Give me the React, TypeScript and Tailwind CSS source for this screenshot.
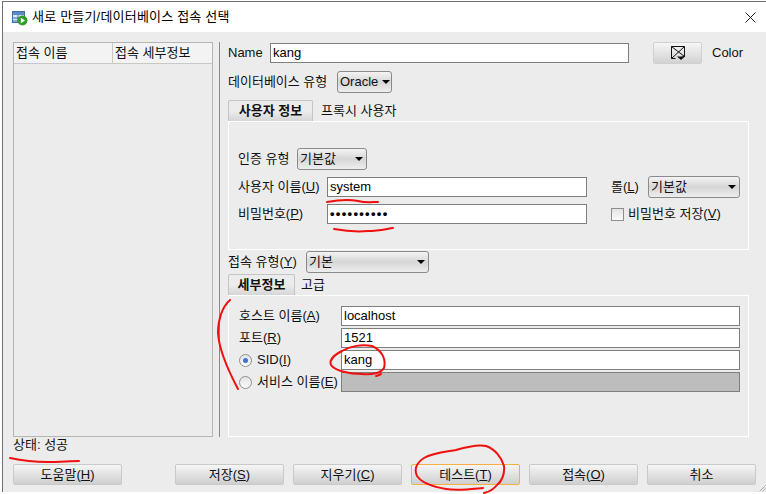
import type { ReactNode } from "react";

function Combo({ label, width }: { label: string; width: string }) {
  return (
    <div className={`flex h-[22px] shrink-0 items-center justify-between rounded-[3px] border border-[#8a8a8a] bg-gradient-to-b from-[#f4f4f4] via-[#d6d6d6] to-[#eeeeee] pl-[2px] ${width}`}>
      <span>{label}</span>
      <span className="h-0 w-0 border-x-[4px] border-t-[4px] border-x-transparent border-t-black" />
    </div>
  );
}

function Field({ value, width, className = "bg-white" }: { value?: ReactNode; width: string; className?: string }) {
  return (
    <div className={`flex h-[20px] shrink-0 items-center border border-[#7f7f7f] pl-[2px] text-black ${width} ${className}`}>
      {value}
    </div>
  );
}

function Btn({ children, focused = false }: { children: ReactNode; focused?: boolean }) {
  return (
    <button
      className={`flex h-[21px] w-[109px] shrink-0 items-center justify-center rounded-[2px] border bg-gradient-to-b from-[#f6f6f6] via-[#e2e2e2] to-[#cfcfcf] text-[#111] ${
        focused ? "border-[#f5b042]" : "border-[#c9c9c9]"
      }`}
    >
      {children}
    </button>
  );
}

function Radio({ checked = false }: { checked?: boolean }) {
  return (
    <span className="mr-[5px] flex h-[13px] w-[13px] shrink-0 items-center justify-center rounded-full border border-[#8e8e8e] bg-gradient-to-b from-[#e4e4e4] to-[#fbfbfb]">
      {checked && <span className="h-[5px] w-[5px] rounded-full bg-[#3f6fd0]" />}
    </span>
  );
}

function Tab({ label, width }: { label: string; width: string }) {
  return (
    <div className={`flex h-full items-center justify-center rounded-t-[2px] border-x border-t border-[#c4c4c4] bg-gradient-to-b from-[#ececec] via-[#ececec] to-[#d6d6d6] font-bold ${width}`}>
      {label}
    </div>
  );
}

function Annotations() {
  return (
    <svg className="pointer-events-none absolute left-0 top-0" width="766" height="494" fill="none" stroke="#f00f0f" strokeWidth="2" strokeLinecap="round" strokeLinejoin="round">
      <path d="M327 202C338 200 348 199 358 201C366 203 372 202 378 202" />
      <path d="M334 229C345 231 358 232 368 231C378 231 386 229 393 228" />
      <path d="M230 300C222 307 218 320 218 333C219 350 229 372 238 389" />
      <path d="M372 346C362 344 350 346 342 351C334 355 329 360 331 365C335 371 350 374 362 374C372 375 381 373 384 368C386 360 383 351 372 346M381 374C379 375 377 376 376 376" />
      <path d="M10 458C24 461 36 462 48 462C60 462 70 461 79 461" />
      <path d="M483 488C472 489 458 491 446 489C434 487 422 483 417 476C414 470 416 463 424 458C432 453 444 452 456 450C466 447 478 444 486 446C495 449 502 458 504 466C505 475 501 482 497 485C494 489 488 492 484 493" />
    </svg>
  );
}

export default function App() {
  return (
    <div className="relative h-[494px] w-[766px] overflow-hidden bg-white text-[13px] leading-[12px] text-[#111] [font-family:'Liberation_Sans','Noto_Sans_CJK_KR',sans-serif]">
      <div className="ml-[2px] mt-[1px] flex h-[491px] w-[764px] flex-col border-l border-t border-[#707070]">
        {/* title bar */}
        <div className="flex h-[30px] shrink-0 items-center bg-white pl-[9px]">
          <svg width="16" height="16" viewBox="0 0 16 16" className="mr-[4px] mt-[1px]">
            <rect x="0.5" y="1.5" width="12" height="11" fill="#dce6f4" stroke="#3f6ea8" />
            <rect x="1" y="2" width="11" height="3" fill="#5b8ac4" />
            <path d="M1 8h11M1 11h11M6 5v7" stroke="#3f6ea8" />
            <circle cx="10.5" cy="10.5" r="5" fill="#2f9e24" />
            <path d="M8.8 7.8l4.2 2.7-4.2 2.7z" fill="#fff" />
          </svg>
          <span className="tracking-[0.2px] text-black">새로 만들기/데이터베이스 접속 선택</span>
          <svg width="11" height="11" viewBox="0 0 11 11" className="ml-auto mr-[10px]" stroke="#222" fill="none">
            <path d="M0.5 0.5l10 10M10.5 0.5l-10 10" />
          </svg>
        </div>

        {/* dialog body */}
        <div className="flex h-[460px] flex-col bg-[#ececec] pl-[10px] pt-[10px]">
          <div className="flex h-[395px]">
            <div className="flex h-full w-[200px] shrink-0 flex-col border border-[#b5b5b5]">
              <div className="flex h-[21px] shrink-0 items-center border-b border-[#c8c8c8] bg-white/40">
                <div className="flex h-full w-[99px] items-center border-r border-[#c8c8c8] pl-[2px]">접속 이름</div>
                <div className="pl-[2px]">접속 세부정보</div>
              </div>
            </div>
            <div className="ml-[6px] h-full w-[1px] shrink-0 bg-[#8a8a8a]" />
            <div className="ml-[8px] flex w-[521px] shrink-0 flex-col">
              <div className="flex h-[22px] items-center">
                <span className="w-[42px]">Name</span>
                <Field value="kang" width="w-[359px]" />
                <div className="ml-[24px] flex h-[22px] w-[49px] items-center justify-center rounded-[2px] border border-[#d0d0d0] bg-gradient-to-b from-[#f6f6f6] to-[#d2d2d2]">
                  <svg width="16" height="16" viewBox="0 0 16 16" fill="none" stroke="#111">
                    <path d="M1.5 1.5h13v10h-2M1.5 1.5v12h4M1.5 1.5l13 10M14.5 1.5l-13 12" />
                    <path d="M7 11.5h8l-4 3.5z" fill="#111" stroke="none" />
                  </svg>
                </div>
                <span className="ml-[10px]">Color</span>
              </div>

              <div className="mt-[7px] flex h-[21px] items-center">
                <span className="w-[109px]">데이터베이스 유형</span>
                <Combo label="Oracle" width="w-[55px] pr-[1px]" />
              </div>

              <div className="mt-[8px] flex h-[21px] items-center">
                <Tab label="사용자 정보" width="w-[85px]" />
                <span className="ml-[8px]">프록시 사용자</span>
              </div>
              <div className="h-[129px] border border-white pl-[9px] pt-[26px]">
                <div className="flex h-[22px] items-center">
                  <span className="w-[59px]">인증 유형</span>
                  <Combo label="기본값" width="w-[70px] pr-[3px]" />
                </div>
                <div className="mt-[6px] flex h-[22px] items-center">
                  <span className="w-[89px] whitespace-nowrap">사용자 이름(<u>U</u>)</span>
                  <Field value="system" width="w-[260px]" />
                  <span className="ml-[24px] w-[37px]">롤(<u>L</u>)</span>
                  <Combo label="기본값" width="w-[92px] pr-[3px]" />
                </div>
                <div className="mt-[6px] flex h-[20px] items-center">
                  <span className="w-[89px]">비밀번호(<u>P</u>)</span>
                  <Field value="••••••••••" width="w-[260px]" className="bg-white font-bold tracking-[1.3px]" />
                  <span className="ml-[24px] mr-[4px] h-[13px] w-[13px] border border-[#8e8e8e] bg-gradient-to-b from-[#e4e4e4] to-[#fbfbfb]" />
                  <span>비밀번호 저장(<u>V</u>)</span>
                </div>
              </div>

              <div className="mt-[1px] flex h-[22px] items-center">
                <span className="w-[78px] whitespace-nowrap">접속 유형(<u>Y</u>)</span>
                <Combo label="기본" width="w-[123px] pr-[3px]" />
              </div>

              <div className="mt-[1px] flex h-[21px] items-center">
                <Tab label="세부정보" width="w-[67px]" />
                <span className="ml-[6px]">고급</span>
              </div>
              <div className="flex h-[142px] flex-col gap-[2px] border border-white pl-[10px] pt-[10px]">
                <div className="flex h-[20px] items-center">
                  <span className="w-[102px] whitespace-nowrap">호스트 이름(<u>A</u>)</span>
                  <Field value="localhost" width="w-[399px]" />
                </div>
                <div className="flex h-[20px] items-center">
                  <span className="w-[102px]">포트(<u>R</u>)</span>
                  <Field value="1521" width="w-[399px]" />
                </div>
                <div className="flex h-[20px] items-center">
                  <div className="flex w-[102px] items-center">
                    <Radio checked />
                    <span>SID(<u>I</u>)</span>
                  </div>
                  <Field value="kang" width="w-[399px]" />
                </div>
                <div className="flex h-[20px] items-center">
                  <div className="flex w-[102px] items-center">
                    <Radio />
                    <span className="whitespace-nowrap">서비스 이름(<u>E</u>)</span>
                  </div>
                  <Field width="w-[399px]" className="bg-[#bdbdbd]" />
                </div>
              </div>
            </div>
          </div>

          <div className="flex h-[16px] items-center">상태: 성공</div>

          <div className="mt-[11px] flex">
            <Btn>도움말(<u>H</u>)</Btn>
            <div className="ml-[53px] flex gap-[9px]">
              <Btn>저장(<u>S</u>)</Btn>
              <Btn>지우기(<u>C</u>)</Btn>
              <Btn focused>테스트(<u>T</u>)</Btn>
              <Btn>접속(<u>O</u>)</Btn>
              <Btn>취소</Btn>
            </div>
          </div>
        </div>
      </div>

      <svg className="absolute bottom-[2px] right-0" width="7" height="7" stroke="#a8a8a8" fill="none">
        <path d="M0.5 6.5l6-6M3.5 6.5l3-3" />
      </svg>
      <Annotations />
    </div>
  );
}
